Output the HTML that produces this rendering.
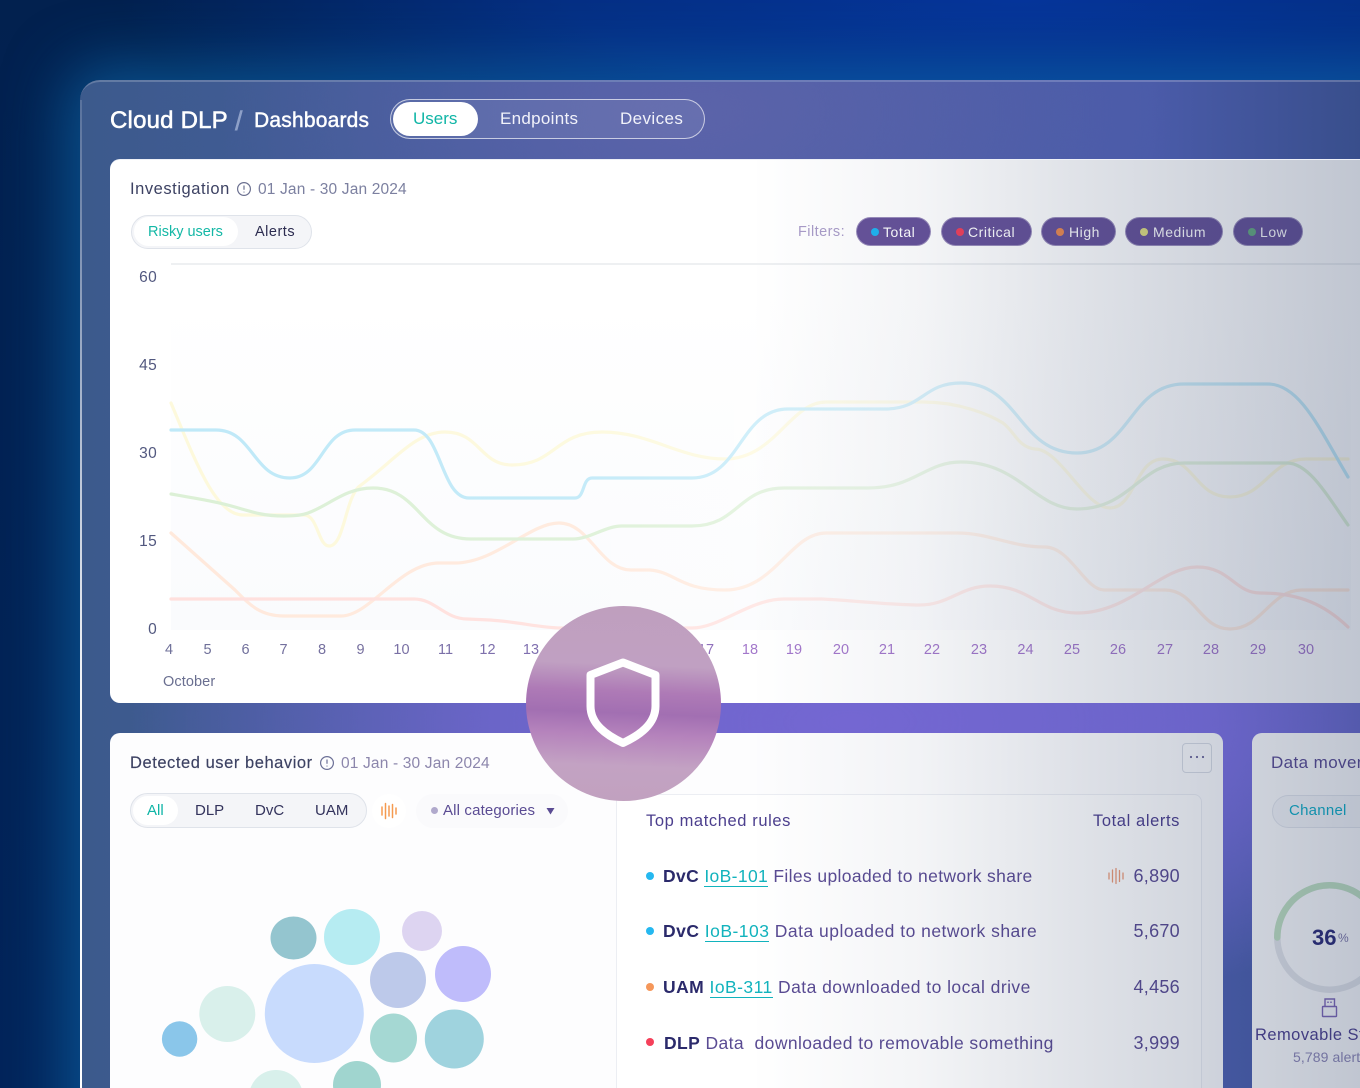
<!DOCTYPE html>
<html lang="en"><head><meta charset="utf-8"><title>Cloud DLP Dashboards</title>
<style>
*{box-sizing:border-box;margin:0;padding:0}
html,body{width:1360px;height:1088px;overflow:hidden;background:#012050}
body{position:relative;font-family:"Liberation Sans",sans-serif}
#bg{position:absolute;inset:0;background:radial-gradient(ellipse 900px 200px at 1020px 0px,#06359a 0%,rgba(6,53,154,.7) 50%,rgba(6,53,154,0) 100%),linear-gradient(180deg,#02214f 0,#02245a 100%)}
#panel{position:absolute;left:80px;top:80px;width:1340px;height:1100px;border-radius:20px;overflow:hidden;box-shadow:0 0 60px 14px rgba(16,115,185,.58);background:radial-gradient(ellipse 720px 300px at 770px 640px,#7467d2 0%,rgba(116,103,210,.8) 50%,rgba(116,103,210,0) 100%),radial-gradient(ellipse 480px 260px at 620px 30px,#5b63a9 0%,rgba(91,99,169,0) 100%),linear-gradient(90deg,#3c5a8c 0%,#4a5ea7 45%,#4a5ba9 80%,#384e8b 96%);border-top:2px solid rgba(255,255,255,.2)}
#edge{position:absolute;left:80px;top:100px;width:2px;height:988px;background:linear-gradient(180deg,rgba(255,255,255,.15) 0,rgba(255,255,255,.95) 60%,#fff 100%)}
.t{position:absolute;white-space:nowrap;line-height:20px}
.card{position:absolute;background:#fff;border-radius:10px;overflow:hidden}
.ov{position:absolute;inset:0;pointer-events:none}
.pill{position:absolute;height:29px;top:57px;border-radius:15px;background:#665299;color:#fff;font-size:14px;line-height:28px;letter-spacing:.55px;border:1px solid rgba(255,255,255,.35)}
.pill i{position:absolute;left:14px;top:10px;width:8px;height:8px;border-radius:50%}
.pill span{position:absolute;white-space:nowrap}
.xl{position:absolute;top:480px;width:40px;text-align:center;font-size:14.5px;line-height:20px}
.yl{position:absolute;left:20px;width:27px;text-align:right;font-size:15.5px;letter-spacing:.3px;line-height:20px;color:#52587f}
.tog{position:absolute;border:1px solid #dfe3ea;background:#f4f5f8;border-radius:18px}
.on{position:absolute;background:#fff;border-radius:15px}
.rule{position:absolute;left:0;font-size:17.5px;line-height:22px;white-space:nowrap;color:#5a4b93;letter-spacing:.36px}
.rule b{color:#2b2a6b}
.rule u{text-decoration:none;color:#12b3bd;border-bottom:1.5px solid #12b3bd}
.d{position:absolute;width:8px;height:8px;border-radius:50%}
.num{position:absolute;right:1px;font-size:18px;line-height:22px;color:#5a4b93;text-align:right;letter-spacing:.3px}
</style></head>
<body>
<div id="bg"></div>
<div id="panel"></div>
<div id="edge"></div>

<div class="t" style="left:110px;top:108px;line-height:26px;font-size:24px;letter-spacing:.2px;color:#fff;-webkit-text-stroke:.55px #fff">Cloud DLP</div>
<div class="t" style="left:235px;top:106px;line-height:30px;font-size:27px;color:#8ea0c8;-webkit-text-stroke:.5px #8ea0c8">/</div>
<div class="t" style="left:254px;top:108px;line-height:26px;font-size:21px;letter-spacing:.2px;color:#fff;-webkit-text-stroke:.45px #fff">Dashboards</div>
<div style="position:absolute;left:390px;top:99px;width:315px;height:40px;border:1.5px solid rgba(255,255,255,.65);border-radius:20px;background:rgba(255,255,255,.08)"></div>
<div style="position:absolute;left:393px;top:102px;width:85px;height:34px;border-radius:17px;background:#fff"></div>
<div class="t" style="left:413px;top:109px;font-size:17px;color:#0fb5a6">Users</div>
<div class="t" style="left:500px;top:109px;font-size:17px;letter-spacing:.3px;color:#f1f2fa">Endpoints</div>
<div class="t" style="left:620px;top:109px;font-size:17px;letter-spacing:.4px;color:#f1f2fa">Devices</div>

<!-- Top card -->
<div class="card" style="left:110px;top:159px;width:1260px;height:544px;border-top:1px solid #eef0f6">
  <div class="t" style="left:20px;top:19px;font-size:16.5px;letter-spacing:.55px;color:#3d4263">Investigation</div>
  <svg style="position:absolute;left:126px;top:21px" width="16" height="16" viewBox="0 0 16 16" fill="none" stroke="#6b7090" stroke-width="1.2"><circle cx="8" cy="8" r="6.4"/><path d="M8 4.5V8.8M8 10.6v.9"/></svg>
  <div class="t" style="left:148px;top:20px;font-size:15.5px;letter-spacing:.16px;color:#7c80a0">01 Jan - 30 Jan 2024</div>
  <div class="tog" style="left:21px;top:55px;width:181px;height:34px"></div>
  <div class="on" style="left:24px;top:57px;width:104px;height:29px"></div>
  <div class="t" style="left:38px;top:62px;font-size:14.5px;color:#14b8a6">Risky users</div>
  <div class="t" style="left:145px;top:62px;font-size:14.5px;letter-spacing:.5px;color:#2c2c50">Alerts</div>
  <div class="t" style="left:688px;top:62px;font-size:14.5px;letter-spacing:.45px;color:#a99cc8">Filters:</div>
  <div class="pill" style="left:746px;width:75px"><i style="background:#1fb4f0"></i><span style="left:26px">Total</span></div>
  <div class="pill" style="left:831px;width:91px"><i style="background:#f0405a"></i><span style="left:26px">Critical</span></div>
  <div class="pill" style="left:931px;width:75px"><i style="background:#ea8a50"></i><span style="left:27px">High</span></div>
  <div class="pill" style="left:1015px;width:98px"><i style="background:#e0de80"></i><span style="left:27px">Medium</span></div>
  <div class="pill" style="left:1123px;width:70px"><i style="background:#66aa80"></i><span style="left:26px">Low</span></div>

  <div style="position:absolute;left:61px;top:103px;width:1200px;height:1.5px;background:#eef0f2"></div>
  <div class="yl" style="top:108px">60</div><div class="yl" style="top:196px">45</div><div class="yl" style="top:284px">30</div><div class="yl" style="top:372px">15</div><div class="yl" style="top:460px">0</div>

  <svg style="position:absolute;left:-110px;top:-160px" width="1360" height="703" fill="none" stroke-width="3.2" stroke-linecap="round" stroke-linejoin="round">
    <defs>
      <linearGradient id="fa" x1="0" y1="0" x2="0" y2="1"><stop offset="0" stop-color="#fafbfd" stop-opacity="0"/><stop offset="1" stop-color="#fafbfd"/></linearGradient>
      <linearGradient id="wash" x1="0" y1="0" x2="1" y2="0"><stop offset="0" stop-color="#fff" stop-opacity="0"/><stop offset=".35" stop-color="#fff" stop-opacity=".1"/><stop offset=".6" stop-color="#fff" stop-opacity=".4"/><stop offset=".8" stop-color="#fff" stop-opacity=".3"/><stop offset="1" stop-color="#fff" stop-opacity="0"/></linearGradient>
    </defs>
    <rect x="171" y="300" width="1180" height="330" fill="url(#fa)" stroke="none"/>
    <path stroke="#fdf9dc" d="M171,403 C195,460 215,515 243,515 L304,515 C318,515 318,546 329,546 C345,546 345,495 361,485 C395,460 415,432 445,432 C480,432 480,465 512,465 C555,465 555,432 602,432 C650,432 680,459 725,459 C775,459 790,402 826,402 L923,402 C960,402 990,415 1003,423 C1015,432 1018,447 1035,449 C1060,449 1085,508 1110,508 C1135,508 1135,459 1163,459 C1195,459 1195,497 1230,497 C1265,497 1270,459 1306,459 L1348,459"/>
    <path stroke="#ffe9dc" d="M171,533 L235,590 C250,605 260,616 284,616 L341,616 C370,616 400,563 439,563 L455,563 C495,563 530,523 559,523 C590,523 600,570 631,570 L650,570 C675,572 680,590 725,590 C775,590 790,533 826,533 L957,533 C990,533 1010,547 1045,547 C1070,547 1085,590 1104,590 L1165,590 C1195,590 1200,629 1230,629 C1262,629 1270,590 1302,590 L1348,590"/>
    <path stroke="#ffe0dd" d="M171,599 L414,599 C435,599 445,619 467,619 L490,620 C520,622 540,628 561,628 L692,628 C720,628 750,599 784,599 L822,599 C860,601 890,605 919,605 C950,605 960,586 990,586 C1030,586 1040,613 1077,613 C1130,613 1160,567 1197,567 C1230,567 1235,593 1260,593 C1300,593 1325,605 1348,627"/>
    <path stroke="#dcf0d6" d="M171,494 C200,499 218,502 235,507 C255,513 265,516 284,516 C290,516 300,516 308,513 C330,505 345,488 373,488 C420,488 420,539 471,539 L573,539 C590,539 605,526 622,526 L692,526 C738,526 738,488 784,488 L868,488 C915,488 925,462 961,462 C1019,462 1035,509 1077,509 C1130,509 1140,463 1184,463 L1287,463 C1310,463 1330,500 1348,525"/>
    <path stroke="#bfe9f8" d="M171,430 L216,430 C253,430 253,478 290,478 C322,478 322,430 355,430 L414,430 C441,430 441,498 469,498 L575,498 C585,498 582,478 592,478 L692,478 C740,478 740,409 788,409 L885,409 C923,409 923,383 961,383 C1019,383 1019,453 1077,453 C1130,453 1130,384 1184,384 L1268,384 C1300,384 1320,430 1348,477"/>
    <rect x="171" y="370" width="1185" height="265" fill="url(#wash)" stroke="none"/>
  </svg>

  <div class="xl" style="left:39px;color:#6f7099">4</div><div class="xl" style="left:77.5px;color:#6f7099">5</div><div class="xl" style="left:115.5px;color:#71709c">6</div><div class="xl" style="left:153.5px;color:#73709e">7</div><div class="xl" style="left:192px;color:#75709f">8</div><div class="xl" style="left:230.5px;color:#77709f">9</div><div class="xl" style="left:271.5px;color:#7970a4">10</div><div class="xl" style="left:315.5px;color:#7b70a8">11</div><div class="xl" style="left:357.5px;color:#7e70ac">12</div><div class="xl" style="left:401px;color:#8070b0">13</div>
  <div class="xl" style="left:576px;color:#9070bc">17</div><div class="xl" style="left:620px;color:#a378cb">18</div><div class="xl" style="left:664px;color:#a378cb">19</div><div class="xl" style="left:711px;color:#a378cb">20</div><div class="xl" style="left:757px;color:#a378cb">21</div><div class="xl" style="left:802px;color:#a378cb">22</div><div class="xl" style="left:849px;color:#a378cb">23</div><div class="xl" style="left:895.5px;color:#a378cb">24</div><div class="xl" style="left:942px;color:#a378cb">25</div><div class="xl" style="left:988px;color:#a378cb">26</div><div class="xl" style="left:1035px;color:#a378cb">27</div><div class="xl" style="left:1081px;color:#a378cb">28</div><div class="xl" style="left:1128px;color:#a378cb">29</div><div class="xl" style="left:1176px;color:#a378cb">30</div>
  <div class="t" style="left:53px;top:512px;font-size:14.5px;letter-spacing:.1px;color:#6a6f90">October</div>
  <div class="ov" style="background:linear-gradient(90deg,rgba(30,50,90,0) 640px,rgba(30,50,90,.05) 810px,rgba(30,50,90,.14) 970px,rgba(30,50,90,.28) 1250px)"></div>
</div>

<!-- Behaviour card -->
<div class="card" style="left:110px;top:733px;width:1113px;height:400px;background:#fdfdfe">
  <div class="t" style="left:20px;top:20px;font-size:16.5px;letter-spacing:.55px;color:#3d4263;-webkit-text-stroke:.15px #3d4263">Detected user behavior</div>
  <svg style="position:absolute;left:209px;top:22px" width="16" height="16" viewBox="0 0 16 16" fill="none" stroke="#6b6f96" stroke-width="1.2"><circle cx="8" cy="8" r="6.4"/><path d="M8 4.5V8.8M8 10.6v.9"/></svg>
  <div class="t" style="left:231px;top:20.500px;font-size:15.5px;letter-spacing:.16px;color:#8c86ac">01 Jan - 30 Jan 2024</div>
  <div class="tog" style="left:20px;top:60px;width:237px;height:35px"></div>
  <div class="on" style="left:23px;top:63px;width:45px;height:29px"></div>
  <div class="t" style="left:37px;top:68px;font-size:15px;color:#0fb5a6">All</div>
  <div class="t" style="left:85px;top:68px;font-size:15px;color:#33335c">DLP</div>
  <div class="t" style="left:145px;top:68px;font-size:15px;color:#33335c">DvC</div>
  <div class="t" style="left:205px;top:68px;font-size:15px;color:#33335c">UAM</div>
  <svg style="position:absolute;left:262px;top:61px" width="34" height="34" fill="none" stroke="#f59a50" stroke-width="1.500" stroke-linecap="round"><circle cx="17" cy="17" r="17" fill="#fff" stroke="none"/><path d="M10 13v8M13.500 9.500v15M17 12v10M20.500 10.500v13M24 14v6"/></svg>
  <div style="position:absolute;left:306px;top:61px;width:152px;height:34px;border-radius:17px;background:#fafafc"></div>
  <div class="d" style="left:321px;top:74px;width:7px;height:7px;background:#b0a9cc"></div>
  <div class="t" style="left:333px;top:68px;font-size:15px;letter-spacing:.15px;color:#5a4b93">All categories</div>
  <svg style="position:absolute;left:436px;top:74px" width="9" height="8"><path d="M0.500 1h8L4.500 7.500z" fill="#5a4b93"/></svg>

  <svg style="position:absolute;left:-110px;top:-733px" width="620" height="1088">
    <ellipse cx="293.500" cy="938" rx="23" ry="21.500" fill="#94c5cf"/>
    <circle cx="352" cy="937" r="28" fill="#b6ecf2"/>
    <circle cx="422" cy="931" r="20" fill="#ddd4f1"/>
    <circle cx="398" cy="980" r="28" fill="#bdc9ea"/>
    <circle cx="463" cy="974" r="28" fill="#bfbcfb"/>
    <circle cx="314.300" cy="1013.500" r="49.500" fill="#c8dbfd"/>
    <circle cx="227.300" cy="1014" r="28" fill="#d9f0eb"/>
    <circle cx="179.600" cy="1039" r="17.700" fill="#8ac6ea"/>
    <ellipse cx="393.500" cy="1038" rx="23.500" ry="24.500" fill="#a5d8d3"/>
    <circle cx="454.300" cy="1039" r="29.500" fill="#9fd3de"/>
    <circle cx="357" cy="1085" r="24" fill="#a0d5cf"/>
    <circle cx="276" cy="1097" r="27" fill="#d8f0eb"/>
  </svg>

  <div style="position:absolute;left:506px;top:61px;width:586px;height:400px;border:1px solid #eceef3;border-radius:8px;background:#fff"></div>
  <div class="t" style="left:536px;top:78px;font-size:16.5px;letter-spacing:.6px;color:#4c3f8e">Top matched rules</div>
  <div class="t" style="right:43px;top:78px;font-size:16.5px;letter-spacing:.6px;color:#4c3f8e">Total alerts</div>

  <div class="d" style="left:536px;top:139px;background:#25b8f0"></div>
  <div class="rule" style="left:553px;top:132px"><b>DvC</b> <u>IoB-101</u> Files uploaded to network share</div>
  <svg style="position:absolute;left:997px;top:134px" width="18" height="18" fill="none" stroke="#eb9a78" stroke-width="1.300" stroke-linecap="round"><path d="M2 6v6M5.500 3v12M9 1.500v15M12.500 3.500v11M16 6v6"/></svg>
  <div class="num" style="right:43px;top:132px">6,890</div>

  <div class="d" style="left:536px;top:194px;background:#25b8f0"></div>
  <div class="rule" style="left:553px;top:187px;letter-spacing:.48px"><b>DvC</b> <u>IoB-103</u> Data uploaded to network share</div>
  <div class="num" style="right:43px;top:187px">5,670</div>

  <div class="d" style="left:536px;top:250px;background:#f5975a"></div>
  <div class="rule" style="left:553px;top:243px;letter-spacing:.45px"><b>UAM</b> <u>IoB-311</u> Data downloaded to local drive</div>
  <div class="num" style="right:43px;top:243px">4,456</div>

  <div class="d" style="left:536px;top:305px;background:#f5405a"></div>
  <div class="rule" style="left:554px;top:299px;letter-spacing:.4px"><b>DLP</b> Data&nbsp; downloaded to removable something</div>
  <div class="num" style="right:43px;top:299px">3,999</div>

  <div style="position:absolute;left:1072px;top:10px;width:30px;height:30px;border:1px solid #d9dde5;border-radius:4px"></div>
  <svg style="position:absolute;left:1079px;top:22px" width="16" height="4" fill="#6a6498"><circle cx="2" cy="2" r="1.100"/><circle cx="8" cy="2" r="1.100"/><circle cx="14" cy="2" r="1.100"/></svg>
  <div class="ov" style="background:linear-gradient(90deg,rgba(30,50,90,0) 640px,rgba(30,50,90,.05) 810px,rgba(30,50,90,.14) 970px,rgba(30,50,90,.21) 1113px)"></div>
</div>

<!-- Data card -->
<div class="card" style="left:1252px;top:733px;width:130px;height:400px;background:#fff">
  <div class="t" style="left:19px;top:20px;font-size:17px;letter-spacing:.4px;color:#5a4b93">Data movement</div>
  <div style="position:absolute;left:20px;top:62px;width:120px;height:33px;border-radius:17px;border:1px solid #e5e8ee;background:#f8f9fb"></div>
  <div class="t" style="left:37px;top:68px;font-size:15px;letter-spacing:.25px;color:#0fb0c8">Channel</div>
  <svg style="position:absolute;left:0;top:130px" width="130" height="150" fill="none" stroke-width="6.500">
    <circle cx="77.500" cy="74.500" r="52.200" stroke="#e6e8ec"/>
    <path d="M25.300,74.500 A52.200,52.200 0 0 1 111.100,34.500" stroke="#c2e3c2" stroke-linecap="round"/>
  </svg>
  <div class="t" style="left:60px;top:194px;font-size:22px;line-height:22px;font-weight:bold;color:#2b2a78">36</div>
  <div class="t" style="left:86px;top:194px;font-size:12px;line-height:22px;color:#7d76a8">%</div>
  <svg style="position:absolute;left:69px;top:264px" width="18" height="22" fill="none" stroke="#8068b8" stroke-width="1.400"><rect x="1.500" y="9.500" width="14" height="10" rx=".5"/><path d="M4 9.500V2h9.500v7.500"/><path d="M7 4.500v1.500M10 4.500v1.500"/></svg>
  <div class="t" style="left:3px;top:292px;font-size:16.5px;letter-spacing:.45px;color:#4c3f8e">Removable Storage</div>
  <div class="t" style="left:41px;top:314px;font-size:14px;letter-spacing:.1px;color:#9089b8">5,789 alerts</div>
  <div class="ov" style="background:linear-gradient(90deg,rgba(30,50,90,.22) 0,rgba(30,50,90,.28) 108px)"></div>
</div>

<!-- Badge -->
<svg style="position:absolute;left:0;top:0" width="1360" height="1088" fill="none">
  <defs><linearGradient id="bd" x1=".52" y1="0" x2=".48" y2="1">
    <stop offset="0" stop-color="#bf9fbe"/><stop offset=".3" stop-color="#c0a0c2"/><stop offset=".44" stop-color="#ae7ab6"/><stop offset=".55" stop-color="#a26fb2"/><stop offset=".66" stop-color="#b583bc"/><stop offset=".82" stop-color="#c3a2c3"/><stop offset="1" stop-color="#c1a1bf"/>
  </linearGradient></defs>
  <circle cx="623.500" cy="703.500" r="97.500" fill="url(#bd)"/>
  <path d="M623,662.500 L655.500,675 V706 C655.500,724 640,735 623,743 C606,735 590.500,724 590.500,706 V675 Z" stroke="#fff" stroke-width="8" stroke-linejoin="round"/>
</svg>
</body></html>
